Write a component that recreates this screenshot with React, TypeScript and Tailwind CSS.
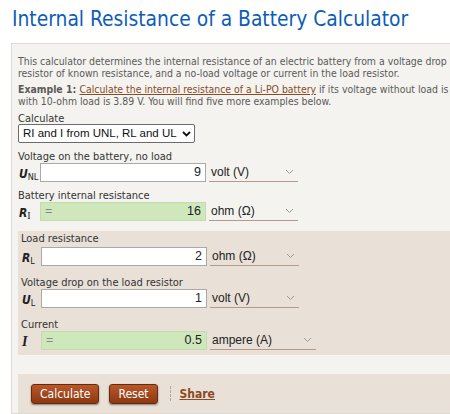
import React from "react";

const tahoma = "font-['DejaVu_Sans_Condensed','DejaVu_Sans',sans-serif]";
const arial = "font-['Liberation_Sans',Arial,sans-serif]";

function Chevron() {
  return (
    <svg width="9" height="6" viewBox="0 0 9 6" className="shrink-0">
      <path d="M1 1 L4.5 4.5 L8 1" fill="none" stroke="#9a9a9a" strokeWidth="1" />
    </svg>
  );
}

function UnitSelect({ text, w }: { text: string; w: string }) {
  return (
    <div
      className={`${w} h-[19px] ml-[3px] flex items-center justify-between pl-[2px] pr-[4px] border-b border-[#b39a8a] ${arial} text-[12px] text-[#222] whitespace-nowrap`}
    >
      <span>{text}</span>
      <Chevron />
    </div>
  );
}

function Row({
  label,
  sym,
  value,
  unit,
  unitW,
  green,
  gap,
  symW,
}: {
  label: string;
  sym: React.ReactNode;
  value: string;
  unit: string;
  unitW: string;
  green?: boolean;
  gap: string;
  symW: string;
}) {
  return (
    <div className="flex flex-col">
      <div className="text-[11px] leading-[11px] h-[11px] text-[#333] whitespace-nowrap">{label}</div>
      <div className={`flex items-end ${gap}`}>
        <div className={`${symW} h-[19px] flex items-center pl-[1px] text-[#222]`}>{sym}</div>
        <div
          className={`w-[166px] h-[19px] border flex items-center justify-between px-[4px] ${arial} text-[12.5px] text-[#222] ${
            green ? "bg-[#cfe8bb] border-[#c2dcae]" : "bg-white border-[#a9a9a9]"
          }`}
        >
          <span className="text-[#888]">{green ? "=" : ""}</span>
          <span>{value}</span>
        </div>
        <UnitSelect text={unit} w={unitW} />
      </div>
    </div>
  );
}

function Sym({ main, sub, serifSub, serifMain }: { main: string; sub?: string; serifSub?: boolean; serifMain?: boolean }) {
  return (
    <span className="whitespace-nowrap">
      <b className={`italic ${serifMain ? "font-['Liberation_Serif',serif] text-[14px]" : "text-[12px]"}`}>{main}</b>
      {sub && (
        <sub className={`text-[9px] not-italic ${serifSub ? "font-['Liberation_Serif',serif] text-[10px]" : ""}`}>{sub}</sub>
      )}
    </span>
  );
}

export default function App() {
  return (
    <div className={`w-[450px] h-[414px] bg-white overflow-hidden ${tahoma}`}>
      <h1 className="h-[43px] pl-[12px] pt-[7px] text-[20.8px] leading-[24px] text-[#0d5db8] font-normal whitespace-nowrap">
        Internal Resistance of a Battery Calculator
      </h1>
      <div className="ml-[11px] w-[460px] h-[371px] border border-[#dcdad3] bg-[#f4f3ef] pl-[6px] pt-[12px]">
        <p className="text-[10.4px] leading-[11.5px] text-[#5a5a5a] whitespace-nowrap">
          This calculator determines the internal resistance of an electric battery from a voltage drop
          <br />
          resistor of known resistance, and a no-load voltage or current in the load resistor.
        </p>
        <p className="mt-[5px] text-[10.4px] leading-[11.5px] text-[#5a5a5a] whitespace-nowrap">
          <b>Example 1: </b>
          <span className="underline text-[#8a4a24]">Calculate the internal resistance of a Li-PO battery</span> if its
          voltage without load is
          <br />
          with 10-ohm load is 3.89 V. You will find five more examples below.
        </p>
        <div className="mt-[6px] text-[11px] leading-[11px] h-[11px] text-[#333]">Calculate</div>
        <div
          className={`mt-[0px] w-[177px] h-[19px] border border-[#6b6b6b] rounded-[2px] bg-white flex items-center justify-between pl-[4px] pr-[3px] ${arial} text-[11.5px] text-[#111] whitespace-nowrap`}
        >
          <span>RI and I from UNL, RL and UL</span>
          <svg width="9" height="6" viewBox="0 0 9 6" className="shrink-0">
            <path d="M1 1 L4.5 4.5 L8 1" fill="none" stroke="#111" strokeWidth="1.8" />
          </svg>
        </div>
        <div className="mt-[8px] flex flex-col gap-[8px]">
          <Row symW="w-[22px]" gap="mt-[1px]" label="Voltage on the battery, no load" sym={<Sym main="U" sub="NL" />} value="9" unit="volt (V)" unitW="w-[89px]" />
          <Row symW="w-[22px]" gap="mt-[1px]" label="Battery internal resistance" sym={<Sym main="R" sub="I" serifSub />} value="16" unit="ohm (Ω)" unitW="w-[89px]" green />
        </div>
        <div className="mt-[10px] h-[124px] bg-[#e9e0d8] pl-[3px] pt-[2px] flex flex-col gap-[11px]">
          <Row symW="w-[20px]" gap="mt-[3px]" label="Load resistance" sym={<Sym main="R" sub="L" />} value="2" unit="ohm (Ω)" unitW="w-[89px]" />
          <Row symW="w-[20px]" gap="mt-[1px]" label="Voltage drop on the load resistor" sym={<Sym main="U" sub="L" />} value="1" unit="volt (V)" unitW="w-[89px]" />
          <Row symW="w-[20px]" gap="mt-[1px]" label="Current" sym={<Sym main="I" serifMain />} value="0.5" unit="ampere (A)" unitW="w-[106px]" green />
        </div>
        <div className="mt-[19px] bg-[#e9e0d8] h-[39px] flex items-center pl-[13px]">
          <button className="h-[20px] px-[8px] rounded-[3px] border border-[#6a2a0a] bg-gradient-to-b from-[#b9582a] to-[#8c3812] text-white text-[12px] leading-[12px] shadow-[0_1px_2px_rgba(0,0,0,0.45)]">
            Calculate
          </button>
          <button className="ml-[10px] h-[20px] px-[8px] rounded-[3px] border border-[#6a2a0a] bg-gradient-to-b from-[#b9582a] to-[#8c3812] text-white text-[12px] leading-[12px] shadow-[0_1px_2px_rgba(0,0,0,0.45)]">
            Reset
          </button>
          <div className="ml-[12px] h-[15px] border-l border-dashed border-[#b8a898]" />
          <span className="ml-[9px] text-[12px] font-bold underline text-[#8a4a24]">Share</span>
        </div>
      </div>
    </div>
  );
}
